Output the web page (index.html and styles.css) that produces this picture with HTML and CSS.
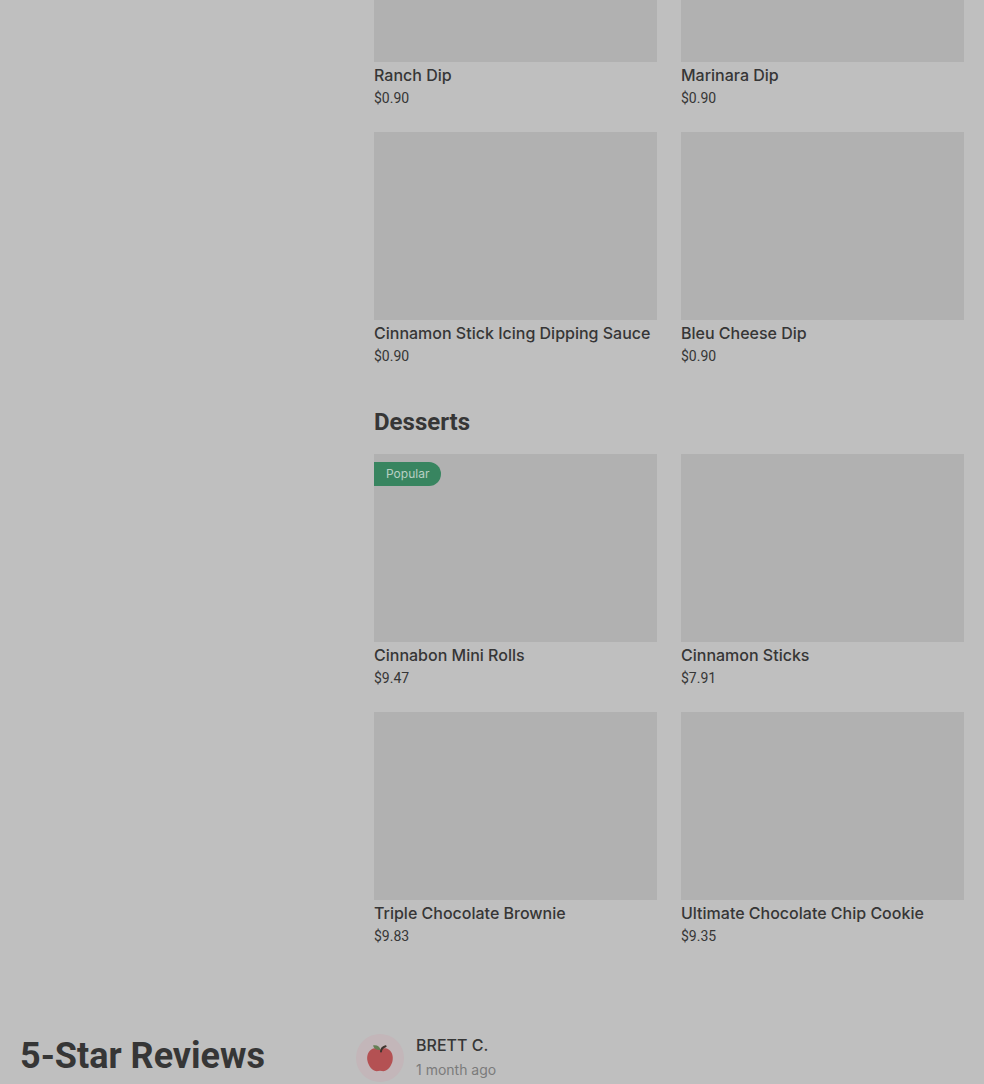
FILE: index.html
```html
<!DOCTYPE html>
<html lang="en">
<head>
    <meta charset="UTF-8">
    <meta name="viewport" content="width=device-width, initial-scale=1.0">
    <title>Menu</title>
    <link rel="stylesheet" href="styles.css">
</head>
<body>
    <main class="menu">
        <section>
            <ul class="items">
                <li class="item">
                    <div class="photo photo-cut"></div>
                    <h3>Ranch Dip</h3>
                    <p>$0.90</p>
                </li>
                <li class="item">
                    <div class="photo photo-cut"></div>
                    <h3>Marinara Dip</h3>
                    <p>$0.90</p>
                </li>
                <li class="item">
                    <div class="photo"></div>
                    <h3>Cinnamon Stick Icing Dipping Sauce</h3>
                    <p>$0.90</p>
                </li>
                <li class="item">
                    <div class="photo"></div>
                    <h3>Bleu Cheese Dip</h3>
                    <p>$0.90</p>
                </li>
            </ul>
        </section>

        <section>
            <h2>Desserts</h2>
            <ul class="items">
                <li class="item">
                    <div class="photo"><span class="badge">Popular</span></div>
                    <h3>Cinnabon Mini Rolls</h3>
                    <p>$9.47</p>
                </li>
                <li class="item">
                    <div class="photo"></div>
                    <h3>Cinnamon Sticks</h3>
                    <p>$7.91</p>
                </li>
                <li class="item">
                    <div class="photo"></div>
                    <h3>Triple Chocolate Brownie</h3>
                    <p>$9.83</p>
                </li>
                <li class="item">
                    <div class="photo"></div>
                    <h3>Ultimate Chocolate Chip Cookie</h3>
                    <p>$9.35</p>
                </li>
            </ul>
        </section>
    </main>

    <section class="reviews">
        <h1>5-Star Reviews</h1>
        <article class="review">
            <svg class="avatar" viewBox="0 0 48 48" aria-hidden="true">
                <circle cx="24" cy="24" r="24" fill="#c3b6b9"/>
                <path d="M24 15.500c-2.500-1.500-6.200-1.800-9 .2-3.400 2.500-4.400 7-3.500 11.300.9 4.500 4.400 9.200 8 10.100 1.500.4 2.900-.4 4.500-.4s3 .8 4.500.4c3.600-.9 7.100-5.600 8-10.100.9-4.300-.1-8.800-3.500-11.300-2.800-2-6.500-1.700-9-.2z" fill="#b45153"/>
                <path d="M25 17.500c.1-2.500 1.200-4.300 4.600-5.300" fill="none" stroke="#40352f" stroke-width="2" stroke-linecap="round"/>
                <path d="M24.500 16c-3.700.4-6.500-1-7.500-4.500 3.900-.8 6.900.9 7.500 4.500z" fill="#667f55"/>
            </svg>
            <div>
                <h3>BRETT C.</h3>
                <time>1 month ago</time>
            </div>
        </article>
    </section>
</body>
</html>
```
FILE: styles.css
```css
body {
    font-family: Inter, Roboto, Arial, sans-serif;
    background-color: #bfbfbf;
    color: #363636;
    margin: 0;
    padding: 0 20px;
}

h1, h2, h3, p, ul {
    margin: 0;
    padding: 0;
}

h1, h2 {
    font-family: Roboto, Arial, sans-serif;
    font-weight: 700;
}

.menu {
    margin-left: 354px;
}

h2 {
    font-size: 24px;
    line-height: 32px;
    padding: 40px 0 16px;
}

.items {
    display: grid;
    grid-template-columns: 1fr 1fr;
    gap: 24px;
    list-style: none;
}

.photo {
    position: relative;
    height: 188px;
    background: #b1b1b1;
    margin-bottom: 2px;
}

.photo-cut {
    height: 62px;
}

h3 {
    font-size: 16px;
    line-height: 22px;
    font-weight: 500;
    margin-bottom: 2px;
}

.item p {
    font-family: Roboto, Arial, sans-serif;
    font-size: 14px;
    line-height: 20px;
}

.badge {
    position: absolute;
    top: 8px;
    left: 0;
    padding: 0 12px;
    font-size: 12px;
    line-height: 24px;
    color: #b9d0c4;
    background: #388560;
    border-radius: 0 12px 12px 0;
}

.reviews {
    display: flex;
    margin-top: 88px;
}

h1 {
    width: 336px;
    font-size: 36px;
    line-height: 44px;
}

.review {
    display: flex;
    gap: 12px;
}

.avatar {
    width: 48px;
    height: 48px;
}

time {
    display: block;
    font-size: 14px;
    line-height: 24px;
    color: #7b7b7b;
}
```
